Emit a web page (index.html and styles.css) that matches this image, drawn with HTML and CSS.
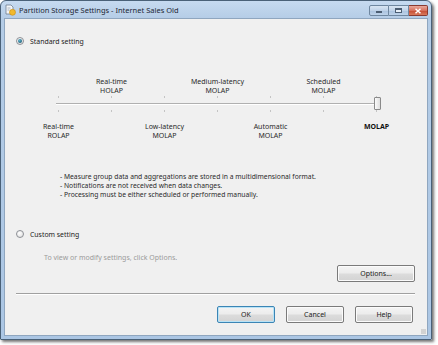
FILE: index.html
```html
<!DOCTYPE html>
<html>
<head>
<meta charset="utf-8">
<link rel="stylesheet" href="styles.css">
</head>
<body>
<div class="window">
  <div class="titlebar">
    <svg class="app-icon" width="11" height="12" viewBox="0 0 11 12">
      <path d="M1 1h5l2 2v7H1z" fill="#f4f6f8" stroke="#6f7f90" stroke-width="0.8"/>
      <path d="M2.5 4h3M2.5 6h2" stroke="#8a98a8" stroke-width="0.7"/>
      <circle cx="7.5" cy="8.3" r="3" fill="#f1b92c" stroke="#c98a12" stroke-width="0.6"/>
    </svg>
    <span class="title">Partition Storage Settings - Internet Sales Old</span>
    <div class="caption-buttons">
      <div class="cap cap-min"><span class="min-glyph"></span></div>
      <div class="cap cap-max"><span class="max-glyph"></span></div>
      <div class="cap cap-close">
        <svg width="8" height="6" viewBox="0 0 8 6"><path d="M1.5 0.8L6.5 5.2M6.5 0.8L1.5 5.2" stroke="#fff" stroke-width="1.5"/></svg>
      </div>
    </div>
  </div>
  <div class="client">
    <label class="radio-row standard">
      <span class="radio checked"><span class="dot"></span></span>
      <span>Standard setting</span>
    </label>

    <div class="slider">
      <div class="lbl top c2">Real-time<br>HOLAP</div>
      <div class="lbl top c4">Medium-latency<br>MOLAP</div>
      <div class="lbl top c6">Scheduled<br>MOLAP</div>

      <div class="track-zone">
        <div class="ticks ticks-top"><i></i><i></i><i></i><i></i><i></i><i></i><i></i></div>
        <div class="track"></div>
        <div class="ticks ticks-bottom"><i></i><i></i><i></i><i></i><i></i><i></i><i></i></div>
        <div class="thumb"></div>
      </div>

      <div class="lbl bottom c1">Real-time<br>ROLAP</div>
      <div class="lbl bottom c3">Low-latency<br>MOLAP</div>
      <div class="lbl bottom c5">Automatic<br>MOLAP</div>
      <div class="lbl bottom c7 bold">MOLAP</div>
    </div>

    <div class="desc">
      <div>- Measure group data and aggregations are stored in a multidimensional format.</div>
      <div>- Notifications are not received when data changes.</div>
      <div>- Processing must be either scheduled or performed manually.</div>
    </div>

    <label class="radio-row custom">
      <span class="radio"></span>
      <span>Custom setting</span>
    </label>
    <div class="hint">To view or modify settings, click Options.</div>
    <div class="options-row">
      <button class="btn options">Options...</button>
    </div>
    <div class="separator"></div>
    <div class="footer">
      <button class="btn default">OK</button>
      <button class="btn">Cancel</button>
      <button class="btn">Help</button>
    </div>
    <div class="grip"></div>
  </div>
</div>
</body>
</html>
```

FILE: styles.css
```css
* { box-sizing: border-box; }
html, body { margin: 0; padding: 0; background: #ffffff; }
body {
  font-family: "Noto Sans", "Open Sans", sans-serif;
  font-size: 7px;
  color: #2a2a2a;
  width: 438px;
  height: 345px;
  overflow: hidden;
}
.window {
  width: 432px;
  height: 340px;
  border: 1px solid #4a6178;
  border-radius: 6px 6px 1px 1px;
  background: linear-gradient(to bottom, #c6daf0 0px, #b4cce6 18px, #abc6e4 100%);
  padding: 0 3px 3px 3px;
  display: flex;
  flex-direction: column;
  box-shadow: 2px 2px 3px rgba(0,0,0,0.55);
}
.titlebar {
  height: 17px;
  display: flex;
  align-items: center;
  padding-left: 1px;
  position: relative;
}
.app-icon { margin-top: 1px; }
.title {
  margin-left: 3px;
  color: #1c2633;
  font-size: 7.5px;
  margin-top: 1px;
}
.caption-buttons {
  margin-left: auto;
  display: flex;
  align-self: flex-start;
  margin-top: 4px;
  margin-right: 0px;
}
.cap {
  height: 11px;
  border: 1px solid #6f87a0;
  display: flex;
  align-items: center;
  justify-content: center;
}
.cap-min {
  width: 20px;
  border-radius: 2px 0 0 2px;
  background: linear-gradient(to bottom, #d8e5f3 0%, #bfd2e8 50%, #a9c1dd 51%, #bed3ea 100%);
}
.cap-max {
  width: 20px;
  border-left: none;
  background: linear-gradient(to bottom, #d8e5f3 0%, #bfd2e8 50%, #a9c1dd 51%, #bed3ea 100%);
}
.cap-close {
  width: 19px;
  border-left: none;
  border-color: #8a3a30;
  border-radius: 0 2px 2px 0;
  background: linear-gradient(to bottom, #e9a99c 0%, #d7715d 50%, #c44a32 51%, #d97a5c 100%);
}
.min-glyph {
  width: 6px; height: 2px;
  background: #fff;
  border: 0.5px solid #4c5e73;
  margin-top: 3px;
}
.max-glyph {
  width: 7px; height: 5px;
  border: 1px solid #4c5e73;
  border-top-width: 2px;
  background: #e6eef7;
}

.client {
  flex: 1;
  background: #f0f0f0;
  border: 1px solid #8fa6bf;
  display: flex;
  flex-direction: column;
  padding: 0 11px 0 11px;
  position: relative;
}

.radio-row {
  display: flex;
  align-items: center;
  height: 10px;
  color: #222;
  font-size: 6.9px;
}
.radio {
  width: 8px; height: 8px;
  border-radius: 50%;
  border: 1px solid #8d9096;
  background: radial-gradient(circle at 40% 35%, #ffffff 0%, #e6e6e6 70%, #d2d2d2 100%);
  margin-right: 6px;
  display: flex;
  align-items: center;
  justify-content: center;
  flex: none;
}
.radio .dot {
  width: 4px; height: 4px; border-radius: 50%;
  background: radial-gradient(circle at 40% 35%, #5fb7d2 0%, #1d5a72 80%);
}
.standard { margin-top: 17px; }

.slider {
  margin-top: 31px;
  margin-left: 16px;
  display: grid;
  grid-template-columns: repeat(7, 53px);
  grid-template-rows: 18px 18px 9px 18px;
}
.lbl {
  text-align: center;
  line-height: 9px;
  white-space: nowrap;
  justify-self: center;
}
.lbl.top { grid-row: 1; }
.lbl.bottom { grid-row: 4; }
.c1 { grid-column: 1; }
.c2 { grid-column: 2; }
.c3 { grid-column: 3; }
.c4 { grid-column: 4; }
.c5 { grid-column: 5; }
.c6 { grid-column: 6; }
.c7 { grid-column: 7; }
.bold { font-weight: bold; color: #111; }

.track-zone {
  grid-row: 2;
  grid-column: 1 / 8;
  position: relative;
  display: flex;
  flex-direction: column;
}
.ticks {
  display: flex;
  justify-content: space-around;
  height: 2px;
}
.ticks i {
  display: block;
  width: 1px;
  height: 2px;
  background: #c4c4c4;
}
.ticks-top { margin-top: 1px; }
.track {
  margin: 5px 24px 0 24px;
  height: 2px;
  border-top: 1px solid #b0b0b0;
  border-bottom: 1px solid #ffffff;
}
.ticks-bottom { margin-top: 5px; }
.thumb {
  position: absolute;
  left: 342px;
  top: 2px;
  width: 7px;
  height: 13px;
  border: 1px solid #8a8a8a;
  border-radius: 1px;
  background: linear-gradient(to right, #fbfbfb, #dedede);
}

.desc {
  margin-top: 32px;
  margin-left: 44px;
  line-height: 9px;
  font-size: 6.75px;
  color: #2a2a2a;
}
.custom { margin-top: 30px; }
.hint {
  margin-top: 14px;
  margin-left: 28px;
  color: #9b9b9b;
}
.options-row {
  display: flex;
  justify-content: flex-end;
  margin-top: 3px;
  padding-right: 1px;
}
.btn {
  font-family: inherit;
  font-size: 7px;
  color: #222;
  width: 58px;
  height: 17px;
  border: 1px solid #7a7a7a;
  border-radius: 2px;
  background: linear-gradient(to bottom, #f4f4f4 0%, #ececec 48%, #dcdcdc 52%, #d3d3d3 100%);
  padding: 0;
  box-shadow: inset 0 0 0 1px #fbfbfb;
}
.options { width: 78px; }
.btn.default {
  border-color: #3b85b5;
  box-shadow: inset 0 0 0 1px #b9e3f6;
}
.separator {
  margin-top: 11px;
  height: 2px;
  border-top: 1px solid #a0a0a0;
  border-bottom: 1px solid #ffffff;
  margin-right: 1px;
}
.footer {
  display: flex;
  justify-content: flex-end;
  gap: 11px;
  margin-top: 11px;
  padding-right: 3px;
}
.grip {
  position: absolute;
  right: 1px;
  bottom: 1px;
  width: 5px;
  height: 5px;
  background: radial-gradient(circle, #b0b0b0 0.6px, transparent 0.8px) 0 0 / 2px 2px;
}
```
